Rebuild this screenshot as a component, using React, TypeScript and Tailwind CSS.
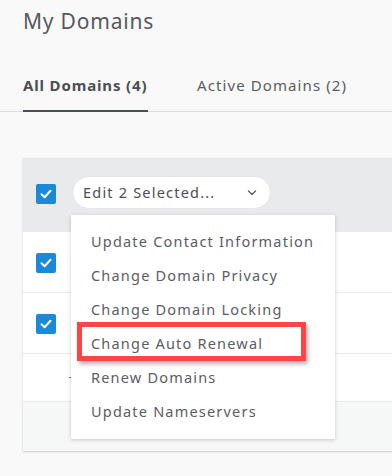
import React from "react";

const font = { fontFamily: '"Noto Sans", "Open Sans", sans-serif' };

function Check({ className = "" }: { className?: string }) {
  return (
    <div className={`w-5 h-5 rounded-[2px] bg-[#1b88d8] flex items-center justify-center ${className}`}>
      <svg width="12" height="10" viewBox="0 0 12 10" fill="none">
        <path d="M1.5 5.2 L4.6 8.2 L10.5 1.8" stroke="white" strokeWidth="2" strokeLinecap="round" strokeLinejoin="round" />
      </svg>
    </div>
  );
}

const items = [
  "Update Contact Information",
  "Change Domain Privacy",
  "Change Domain Locking",
  "Change Auto Renewal",
  "Renew Domains",
  "Update Nameservers",
];

export default function App() {
  return (
    <div className="w-[392px] h-[476px] overflow-hidden bg-[#f9f9f9] text-[#4b4e53]" style={font}>
      <div className="pl-[23px] pt-[7px]">
        <h1 className="text-[21px] leading-[28px] text-[#55585c] tracking-[0.8px]">My Domains</h1>
      </div>
      <div className="pl-[23px] mt-[38px] flex items-end border-b border-[#dcdcdc]">
        <div className="w-[125px] pb-[13px] border-b-2 border-[#4b4e53] -mb-px">
          <span className="text-[15px] font-bold text-[#4b4e53] tracking-[0.85px] whitespace-nowrap">All Domains (4)</span>
        </div>
        <div className="ml-[49px] pb-[14px]">
          <span className="text-[15px] text-[#5a5d62] tracking-[1.1px] whitespace-nowrap">Active Domains (2)</span>
        </div>
      </div>
      <div className="relative ml-[23px] mt-[46px] w-[400px] bg-white shadow-[0_1px_2px_rgba(0,0,0,0.18)]">
        <div className="h-[74px] bg-[#e9eaeb] flex items-center pl-[13px]">
          <Check className="-mt-[2px]" />
          <div className="ml-4 -mt-[5px] w-[199px] h-[33px] rounded-full bg-white border border-[#e2e3e4] flex items-center pl-[10px] pr-[13px]">
            <span className="text-[14.5px] tracking-[1.2px] text-[#4b4e53] flex-1 whitespace-nowrap">Edit 2 Selected...</span>
            <svg width="10" height="6" viewBox="0 0 10 6" fill="none">
              <path d="M1.5 1 L5 4.5 L8.5 1" stroke="#5a5d62" strokeWidth="1.4" strokeLinecap="round" strokeLinejoin="round" />
            </svg>
          </div>
        </div>
        <div className="h-[61px] border-b border-[#e8e9ea] flex items-center pl-[13px]">
          <Check className="mt-[2px]" />
        </div>
        <div className="h-[61px] border-b border-[#e8e9ea] flex items-center pl-[13px]">
          <Check className="mt-[2px]" />
        </div>
        <div className="h-[48px] border-b border-[#e8e9ea] flex items-center pl-[46px]">
          <div className="w-[3px] h-px bg-[#777]" />
        </div>
        <div className="h-[49px] bg-[#f6f7f7]" />

        <div className="absolute left-[48px] top-[57px] w-[264px] bg-white shadow-[0_1px_4px_rgba(0,0,0,0.2)] pt-[10px] pb-[10px]">
          {items.map((t) => (
            <div key={t} className="h-[34px] flex items-center pl-[20px]">
              <span className="text-[14.5px] tracking-[1.2px] text-[#5a5d63] whitespace-nowrap">{t}</span>
            </div>
          ))}
          <div className="absolute left-[6px] top-[107px] w-[229px] h-[39px] border-[5px] border-[#fe4445] shadow-[2px_3px_4px_rgba(0,0,0,0.3)]" />
        </div>
      </div>
    </div>
  );
}
